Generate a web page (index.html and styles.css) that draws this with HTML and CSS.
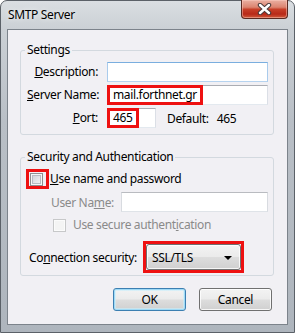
FILE: index.html
```html
<!DOCTYPE html>
<html>
<head>
<meta charset="utf-8">
<link rel="stylesheet" href="styles.css">
</head>
<body>
<div class="window">
  <div class="titlebar">
    <span class="title">SMTP Server</span>
    <div class="close">
      <svg width="15" height="12" viewBox="0 0 15 12">
        <path d="M3 2 L12 10 M12 2 L3 10" stroke="#4a3a3a" stroke-width="4.4" stroke-linecap="round"/>
        <path d="M3 2 L12 10 M12 2 L3 10" stroke="#ffffff" stroke-width="2.4" stroke-linecap="round"/>
      </svg>
    </div>
  </div>
  <div class="client">
    <fieldset class="group settings">
      <legend>Settings</legend>
      <div class="form">
        <span class="lbl"><u>D</u>escription:</span>
        <div class="field focus"></div>
        <span class="lbl"><u>S</u>erver Name:</span>
        <div class="field"><span class="mark">mail.forthnet.gr</span></div>
        <span class="lbl"><u>P</u>ort:</span>
        <div class="port-row">
          <div class="field port"><span class="mark">465</span></div>
          <span class="default-lbl">Default:</span>
          <span class="default-val">465</span>
        </div>
      </div>
    </fieldset>
    <fieldset class="group security">
      <legend>Security and Authentication</legend>
      <div class="check-row">
        <span class="mark-box"><span class="checkbox"></span></span>
        <span class="check-lbl"><u>U</u>se name and password</span>
      </div>
      <div class="user-row disabled">
        <span>User Na<u>m</u>e:</span>
        <div class="field off"></div>
      </div>
      <div class="secure-row disabled">
        <span class="checkbox off"></span>
        <span class="secure-lbl">Use secure authent<u>i</u>cation</span>
      </div>
      <div class="conn-row">
        <span class="conn-lbl">Co<u>n</u>nection security:</span>
        <div class="mark-sel">
          <div class="select"><span>SSL/TLS</span><span class="arrow"></span></div>
        </div>
      </div>
    </fieldset>
    <div class="buttons">
      <div class="btn default">OK</div>
      <div class="btn">Cancel</div>
    </div>
  </div>
</div>
</body>
</html>
```
FILE: styles.css
```css
* { box-sizing: border-box; }
html, body { margin: 0; padding: 0; }
body {
  width: 295px;
  height: 333px;
  overflow: hidden;
  background: #ffffff;
  font-family: "Noto Sans", "Open Sans", sans-serif;
  font-size: 12px;
  letter-spacing: -0.35px;
  color: #000;
}
u { text-decoration: underline; text-decoration-thickness: 1px; text-underline-offset: 1px; }

.window {
  width: 295px;
  height: 333px;
  display: flex;
  flex-direction: column;
  border: 1px solid #5b6168;
  border-radius: 7px 7px 0 0;
  background: linear-gradient(180deg, #dadee2 0px, #cbd0d5 28px, #b9bfc6 120px, #aeb5bd 100%);
  padding: 0 6px 7px 6px;
}
.titlebar {
  height: 28px;
  display: flex;
  justify-content: space-between;
  align-items: flex-start;
}
.title {
  margin: 6px 0 0 1px;
  line-height: 16px;
  text-shadow: 0 0 5px rgba(255,255,255,0.9);
}
.close {
  width: 47px;
  height: 19px;
  margin-top: -1px;
  border: 1px solid #5a2a22;
  border-top: none;
  border-radius: 0 0 4px 4px;
  background: linear-gradient(180deg, #eab0a2 0%, #dc8470 40%, #c73f28 52%, #b82918 78%, #d05a3c 100%);
  box-shadow: inset 0 0 0 1px rgba(255,210,200,0.45);
  display: flex;
  align-items: center;
  justify-content: center;
}
.close svg { display: block; }

.client {
  flex: 1;
  display: flex;
  flex-direction: column;
  border: 1px solid #7c838b;
  background: #f1f0f4;
}

.group {
  margin: 0 13px 0 12px;
  padding: 4px 5px 6px 6px;
  border: 1px solid #d3d9df;
  border-radius: 3px;
  min-width: 0;
}
.group legend {
  padding: 0 2px;
  margin-left: -2px;
  line-height: 16px;
}
.settings { margin-top: 12px; }
.security { margin-top: 14px; padding-bottom: 2px; }

.form {
  display: grid;
  grid-template-columns: 71px 161px;
  grid-auto-rows: 20px;
  column-gap: 9px;
  row-gap: 3px;
}
.lbl {
  align-self: center;
  text-align: right;
  white-space: nowrap;
  line-height: 16px;
}
.field {
  height: 20px;
  background: #ffffff;
  border: 1px solid;
  border-color: #abadb3 #dbdfe6 #e3e9ef #e2e3ea;
  display: flex;
  align-items: stretch;
}
.field.focus { border-color: #7aaedf #a9cbec #b6d3ef #a9cbec; }
.field.off { border-color: #b9bbc0 #d8dbe0 #dfe3e8 #d8dbe0; }
.mark {
  margin: -1px 0 -1px -1px;
  border: 3px solid #ee1111;
  padding: 0 3px;
  display: flex;
  align-items: center;
  white-space: nowrap;
  line-height: 14px;
}
.port-row {
  display: flex;
  align-items: center;
}
.field.port { width: 49px; }
.default-lbl { margin-left: 11px; }
.default-val { margin-left: 8px; }

.check-row {
  display: flex;
  align-items: center;
  height: 20px;
  margin-left: -1px;
}
.mark-box {
  border: 3px solid #ee1111;
  padding: 1px 3px 0 1px;
  display: flex;
}
.checkbox {
  display: block;
  width: 13px;
  height: 13px;
  border: 1px solid #8e8f8f;
  background: linear-gradient(135deg, #c9cdd2 0%, #e4e6e8 55%, #f7f7f7 100%);
  box-shadow: inset 0 0 0 1px #f6f6f6, inset 0 0 0 2px #b7bcc2;
}
.checkbox.off {
  border-color: #c7c8c9;
  background: #f4f4f4;
  box-shadow: inset 0 0 0 1px #fbfbfb;
}
.check-lbl { margin-left: 1px; line-height: 16px; }

.disabled { color: #8a8a8a; }
.user-row {
  margin-top: 3px;
  height: 20px;
  display: flex;
  align-items: center;
  padding-left: 24px;
}
.user-row .field { margin-left: auto; width: 147px; }

.secure-row {
  margin-top: 5px;
  height: 16px;
  display: flex;
  align-items: center;
  padding-left: 26px;
}
.secure-lbl { margin-left: 7px; line-height: 16px; }

.conn-row {
  margin-top: 8px;
  display: flex;
  align-items: center;
  padding-left: 2px;
}
.conn-lbl { width: 114px; white-space: nowrap; }
.mark-sel {
  border: 3px solid #ee1111;
  display: flex;
}
.select {
  width: 95px;
  height: 26px;
  border: 1px solid #707070;
  border-radius: 3px;
  background: linear-gradient(180deg, #f3f3f3 0%, #ebebeb 48%, #dddddd 52%, #d0d0d0 100%);
  box-shadow: inset 0 0 0 1px rgba(255,255,255,0.8);
  display: flex;
  align-items: center;
  justify-content: space-between;
  padding: 0 8px 0 5px;
}
.arrow {
  width: 0;
  height: 0;
  border-left: 4px solid transparent;
  border-right: 4px solid transparent;
  border-top: 4px solid #000;
  margin-top: 1px;
}

.buttons {
  margin-top: 12px;
  margin-right: 15px;
  display: flex;
  justify-content: flex-end;
  gap: 13px;
}
.btn {
  width: 73px;
  height: 23px;
  border: 1px solid #707070;
  border-radius: 3px;
  background: linear-gradient(180deg, #f3f3f3 0%, #ebebeb 48%, #dddddd 52%, #d0d0d0 100%);
  box-shadow: inset 0 0 0 1px rgba(255,255,255,0.8);
  display: flex;
  align-items: center;
  justify-content: center;
  line-height: 16px;
}
.btn.default {
  border-color: #3c7fb1;
  box-shadow: inset 0 0 0 1px #9fdaf6, inset 0 0 0 2px rgba(200,238,252,0.6);
}
```
